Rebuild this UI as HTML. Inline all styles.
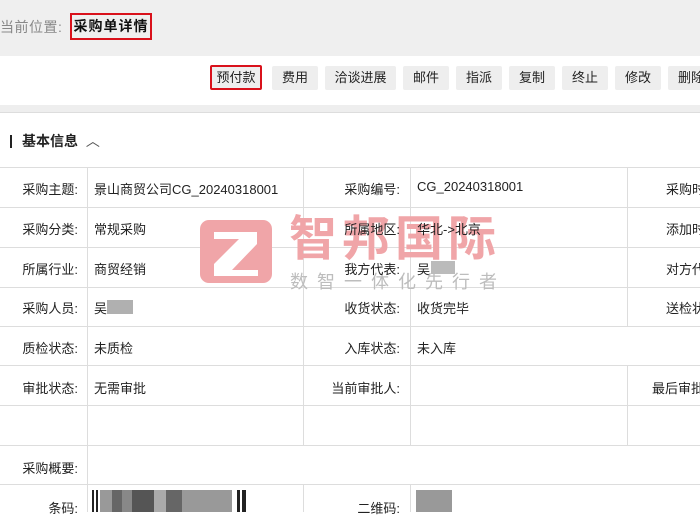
<!DOCTYPE html>
<html><head><meta charset="utf-8"><style>
*{margin:0;padding:0;box-sizing:border-box}
body{width:700px;height:512px;overflow:hidden;background:#fff;font-family:"Liberation Sans","Noto Sans CJK SC",sans-serif;font-size:13px;color:#222;position:relative}
.hdr{position:absolute;left:0;top:0;width:700px;height:56px;background:#efefef}
.crumb{position:absolute;left:0;top:17px;font-size:14px;color:#888;letter-spacing:0.5px}
.cur{position:absolute;left:70px;top:13px;width:82px;height:27px;border:2px solid #d9111b;font-weight:bold;color:#111;font-size:14px;line-height:23px;text-align:center;letter-spacing:1px}
.bar{position:absolute;left:0;top:56px;width:700px;height:49px;background:#fff}
.strip{position:absolute;left:0;top:105px;width:700px;height:8px;background:#eee;border-bottom:1px solid #ddd}
.btn{position:absolute;top:66px;height:24px;background:#eee;border-radius:2px;font-size:13px;line-height:24px;text-align:center;color:#222}
.sec{position:absolute;left:10px;top:131px;font-weight:bold;font-size:14px}
.sec:before{content:"";display:inline-block;width:2px;height:13px;background:#222;margin-right:10px;vertical-align:-2px}
.hl{position:absolute;left:0;width:700px;height:1px;background:#ddd}
.vl{position:absolute;width:1px;background:#ddd}
.t{position:absolute;font-size:13px;color:#222;white-space:nowrap}
.r{text-align:right}
.blur{position:absolute;background:#aaa}
</style></head><body>
<div class="hdr"></div>
<div class="crumb">当前位置:</div>
<div class="cur">采购单详情</div>
<div class="bar"></div>
<div class="btn" style="left:210px;width:52px;border:2px solid #d9111b;line-height:21px;height:25px;top:65px">预付款</div>
<div class="btn" style="left:272px;width:46px">费用</div>
<div class="btn" style="left:325px;width:71px">洽谈进展</div>
<div class="btn" style="left:403px;width:46px">邮件</div>
<div class="btn" style="left:456px;width:46px">指派</div>
<div class="btn" style="left:509px;width:46px">复制</div>
<div class="btn" style="left:562px;width:46px">终止</div>
<div class="btn" style="left:615px;width:46px">修改</div>
<div class="btn" style="left:668px;width:46px">删除</div>
<div class="strip"></div>
<div class="sec">基本信息 <span style="font-weight:normal;color:#555;margin-left:4px">︿</span></div>

<div class="hl" style="top:167px"></div>
<div class="hl" style="top:207px"></div>
<div class="hl" style="top:247px"></div>
<div class="hl" style="top:287px"></div>
<div class="hl" style="top:326px"></div>
<div class="hl" style="top:365px"></div>
<div class="hl" style="top:405px"></div>
<div class="hl" style="top:445px"></div>
<div class="hl" style="top:484px"></div>
<div class="vl" style="left:87px;top:167px;height:345px"></div>
<div class="vl" style="left:303px;top:167px;height:278px"></div>
<div class="vl" style="left:410px;top:167px;height:278px"></div>
<div class="vl" style="left:627px;top:167px;height:160px"></div>
<div class="vl" style="left:627px;top:365px;height:80px"></div>
<div class="vl" style="left:303px;top:484px;height:28px"></div>
<div class="vl" style="left:410px;top:484px;height:28px"></div>

<svg style="position:absolute;left:200px;top:220px" width="72" height="63" viewBox="0 0 72 63"><rect x="0" y="0" width="72" height="63" rx="9" fill="#f0a5a8"/><path d="M14 12H57V24L32 50H58V56H14V44L39 19H14Z" fill="#fff"/></svg>
<div class="t" style="left:289px;top:211px;font-size:48px;font-weight:bold;color:#f0a5a8;letter-spacing:5px;line-height:58px">智邦国际</div>
<div class="t" style="left:290px;top:271px;font-size:18px;line-height:22px;color:#bdbdbd;letter-spacing:9px">数智一体化先行者</div>

<div class="t r" style="left:0;width:78px;top:179px">采购主题:</div>
<div class="t" style="left:94px;top:179px">景山商贸公司CG_20240318001</div>
<div class="t r" style="left:303px;width:97px;top:179px">采购编号:</div>
<div class="t" style="left:417px;top:179px">CG_20240318001</div>
<div class="t" style="left:666px;top:179px">采购时</div>

<div class="t r" style="left:0;width:78px;top:219px">采购分类:</div>
<div class="t" style="left:94px;top:219px">常规采购</div>
<div class="t r" style="left:303px;width:97px;top:219px">所属地区:</div>
<div class="t" style="left:417px;top:219px">华北-&gt;北京</div>
<div class="t" style="left:666px;top:219px">添加时</div>

<div class="t r" style="left:0;width:78px;top:259px">所属行业:</div>
<div class="t" style="left:94px;top:259px">商贸经销</div>
<div class="t r" style="left:303px;width:97px;top:259px">我方代表:</div>
<div class="t" style="left:417px;top:259px">吴</div>
<div class="blur" style="left:431px;top:261px;width:24px;height:13px;background:#bbb"></div>
<div class="t" style="left:666px;top:259px">对方代</div>

<div class="t r" style="left:0;width:78px;top:298px">采购人员:</div>
<div class="t" style="left:94px;top:298px">吴</div>
<div class="blur" style="left:107px;top:300px;width:26px;height:14px;background:#b0b0b0"></div>
<div class="t r" style="left:303px;width:97px;top:298px">收货状态:</div>
<div class="t" style="left:417px;top:298px">收货完毕</div>
<div class="t" style="left:666px;top:298px">送检状</div>

<div class="t r" style="left:0;width:78px;top:338px">质检状态:</div>
<div class="t" style="left:94px;top:338px">未质检</div>
<div class="t r" style="left:303px;width:97px;top:338px">入库状态:</div>
<div class="t" style="left:417px;top:338px">未入库</div>

<div class="t r" style="left:0;width:78px;top:378px">审批状态:</div>
<div class="t" style="left:94px;top:378px">无需审批</div>
<div class="t r" style="left:303px;width:97px;top:378px">当前审批人:</div>
<div class="t" style="left:652px;top:378px">最后审批</div>

<div class="t r" style="left:0;width:78px;top:458px">采购概要:</div>

<div class="t r" style="left:0;width:78px;top:498px">条码:</div>
<div class="blur" style="left:92px;top:490px;width:154px;height:22px;background:linear-gradient(90deg,#222 0 2px,#fff 2px 4px,#222 4px 6px,#fff 6px 8px,#999 8px 20px,#666 20px 30px,#888 30px 40px,#555 40px 62px,#aaa 62px 74px,#666 74px 90px,#999 90px 140px,#fff 140px 145px,#222 145px 148px,#fff 148px 150px,#222 150px 152px)"></div>
<div class="t r" style="left:303px;width:97px;top:498px">二维码:</div>
<div class="blur" style="left:416px;top:490px;width:36px;height:22px;background:#999"></div>
</body></html>
